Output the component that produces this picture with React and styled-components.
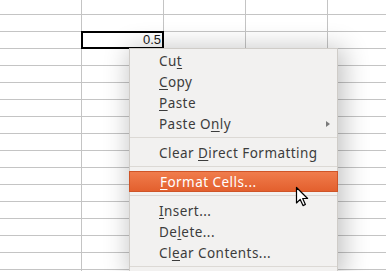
import React from "react"
import styled, { createGlobalStyle } from "styled-components"

const GlobalStyle = createGlobalStyle`
html, body {
  margin: 0;
  padding: 0;
  background: #ffffff;
  overflow: hidden;
}
#root {
  width: 386px;
  height: 271px;
}
`

const Screen = styled.div`
position: relative;
width: 386px;
height: 271px;
overflow: hidden;
background: #ffffff;
`

const Sheet = styled.div`
display: grid;
grid-template-columns: repeat(5, 82px);
grid-auto-rows: 17px;
margin-top: -2px;
`

const Cell = styled.div`
position: relative;
box-sizing: border-box;
border-right: 1px solid #c4c4c4;
border-bottom: 1px solid #c4c4c4;
font-family: "Liberation Sans", Arial, sans-serif;
font-size: 13px;
line-height: 16px;
color: #1a1a1a;
text-align: right;
padding-right: 2px;

${(p) => p.$selected && `
  &::after {
    content: "";
    position: absolute;
    left: -1px;
    top: -1px;
    right: -1px;
    bottom: -1px;
    border: 2px solid #000000;
  }
`}
`

const Menu = styled.div`
position: absolute;
left: 129px;
top: 48px;
width: 209px;
box-sizing: border-box;
background: #f2f1f0;
border: 1px solid #cfccc8;
padding-top: 1px;
box-shadow: 3px 3px 24px 3px rgba(0, 0, 0, 0.24);
font-family: "Noto Sans", "DejaVu Sans", sans-serif;
font-size: 13.5px;
letter-spacing: 0.45px;
color: #3c3c3c;
`

const Item = styled.div`
position: relative;
display: flex;
align-items: center;
box-sizing: border-box;
height: 21px;
padding-left: 29px;
white-space: nowrap;

${(p) => p.$active && `
  margin: 0 -1px;
  padding-left: 30px;
  color: #ffffff;
  background: linear-gradient(#f07c4c, #e3602e);
  border: 1px solid #cf5427;
`}
`

const Mnemonic = styled.span`
text-decoration: underline;
text-decoration-thickness: 1px;
text-underline-offset: 2px;
`

const SubArrow = styled.span`
position: absolute;
right: 7px;
top: 8px;
width: 0;
height: 0;
border-left: 4px solid #7a7a7a;
border-top: 3px solid transparent;
border-bottom: 3px solid transparent;
`

const Separator = styled.div`
height: 1px;
margin: 3px 0 4px;
background: #dcd9d5;
`

const Pointer = styled.svg`
position: absolute;
left: 295px;
top: 186px;
`

const items = [
  { label: "Cut", key: 2 },
  { label: "Copy", key: 0 },
  { label: "Paste", key: 0 },
  { label: "Paste Only", key: 7, sub: true },
  { sep: true },
  { label: "Clear Direct Formatting", key: 6 },
  { sep: true },
  { label: "Format Cells...", key: 0, active: true },
  { sep: true },
  { label: "Insert...", key: 0 },
  { label: "Delete...", key: 2 },
  { label: "Clear Contents...", key: 2 },
  { sep: true },
]

function Label({ text, at }) {
  return (
    <span>
      {text.slice(0, at)}
      <Mnemonic>{text[at]}</Mnemonic>
      {text.slice(at + 1)}
    </span>
  )
}

export default function App() {
  const cells = []
  for (let r = 0; r < 17; r++) {
    for (let c = 0; c < 5; c++) {
      const selected = r === 2 && c === 1
      cells.push(
        <Cell key={`${r}-${c}`} $selected={selected}>
          {selected ? "0.5" : ""}
        </Cell>
      )
    }
  }

  return (
    <Screen>
      <GlobalStyle />
      <Sheet>{cells}</Sheet>

      <Menu>
        {items.map((it, i) =>
          it.sep ? (
            <Separator key={i} />
          ) : (
            <Item key={i} $active={it.active}>
              <Label text={it.label} at={it.key} />
              {it.sub && <SubArrow />}
            </Item>
          )
        )}
      </Menu>

      <Pointer width="14" height="22" viewBox="0 0 14 22">
        <path
          d="M1.5 1.5 L1.5 17 L5.2 13.4 L8 19.6 L10.4 18.5 L7.7 12.5 L12.6 12.5 Z"
          fill="#ffffff"
          stroke="#000000"
          strokeWidth="1.2"
          strokeLinejoin="round"
        />
      </Pointer>
    </Screen>
  )
}
